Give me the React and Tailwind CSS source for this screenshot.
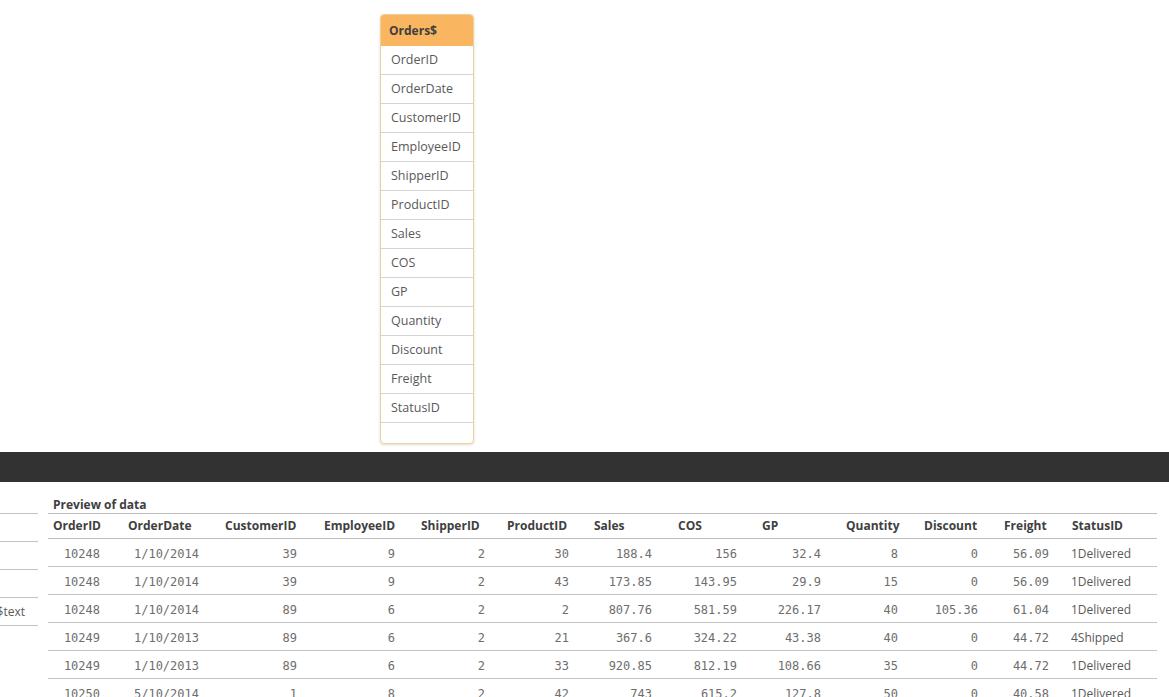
import React from "react";

const fields = ["OrderID","OrderDate","CustomerID","EmployeeID","ShipperID","ProductID","Sales","COS","GP","Quantity","Discount","Freight","StatusID"];

const cols = [
  { w: "w-[75px]", pr: "pr-[23px]" },
  { w: "w-[97px]", pr: "pr-[21px]" },
  { w: "w-[99px]", pr: "pr-[22px]" },
  { w: "w-[97px]", pr: "pr-[21px]" },
  { w: "w-[86px]", pr: "pr-[17px]" },
  { w: "w-[87px]", pr: "pr-[20px]" },
  { w: "w-[84px]", pr: "pr-[21px]" },
  { w: "w-[84px]", pr: "pr-[20px]" },
  { w: "w-[84px]", pr: "pr-[20px]" },
  { w: "w-[78px]", pr: "pr-[21px]" },
  { w: "w-[80px]", pr: "pr-[21px]" },
  { w: "w-[68px]", pr: "pr-[18px]" },
  { w: "w-[90px]", pr: "pr-[4px]" },
];

const rows = [
  ["10248","1/10/2014","39","9","2","30","188.4","156","32.4","8","0","56.09","1Delivered"],
  ["10248","1/10/2014","39","9","2","43","173.85","143.95","29.9","15","0","56.09","1Delivered"],
  ["10248","1/10/2014","89","6","2","2","807.76","581.59","226.17","40","105.36","61.04","1Delivered"],
  ["10249","1/10/2013","89","6","2","21","367.6","324.22","43.38","40","0","44.72","4Shipped"],
  ["10249","1/10/2013","89","6","2","33","920.85","812.19","108.66","35","0","44.72","1Delivered"],
  ["10250","5/10/2014","1","8","2","42","743","615.2","127.8","50","0","40.58","1Delivered"],
];

const sans = "font-['Open_Sans','Noto_Sans',sans-serif]";
const mono = "font-['DejaVu_Sans_Mono','Liberation_Mono',monospace]";

export default function App() {
  return (
    <div className={`w-[1169px] h-[697px] overflow-hidden bg-white ${sans}`}>
      {/* Model viewer canvas */}
      <div className="h-[452px] flex justify-start pl-[380px] pt-[14px]">
        <div className="w-[94px] h-[430px] rounded-[4px] border border-[#ecd19c] bg-white shadow-[0_1px_3px_rgba(120,90,30,0.2)] overflow-hidden flex flex-col">
          <div className="h-[31px] shrink-0 bg-[#f9b55f] flex items-center pl-[8px] text-[12px] font-bold text-[#404040]">
            Orders$
          </div>
          {fields.map((f) => (
            <div key={f} className="h-[29px] shrink-0 border-b border-[#d4d4d4] flex items-center pl-[10px] text-[12.5px] text-[#595959]">
              {f}
            </div>
          ))}
          <div className="flex-1" />
        </div>
      </div>

      {/* Dark divider bar */}
      <div className="h-[30px] bg-[#323232]" />

      {/* Bottom area */}
      <div className="flex">
        {/* Left list (cut off) */}
        <div className="w-[38px] shrink-0 overflow-hidden pt-[31px]">
          {["", "", "", "OrderStatus$text", ""].map((t, i) => (
            <div key={i} className="h-[28px] border-t border-[#c4c4c4] flex items-center justify-end pr-[13px] text-[12px] text-[#595959] whitespace-nowrap">
              {t}
            </div>
          ))}
        </div>

        {/* Preview table */}
        <div className="ml-[10px] w-[1109px] shrink-0">
          <div className="h-[31px] pt-[16px] pl-[5px] leading-[14px] text-[12px] font-bold text-[#404040]">
            Preview of data
          </div>
          <div className="flex h-[26px] border-t border-b border-[#bdbdbd] items-center">
            {fields.map((f, i) => (
              <div key={f} className={`${cols[i].w} shrink-0 pl-[5px] text-[12px] font-bold text-[#404040] whitespace-nowrap`}>
                {f}
              </div>
            ))}
          </div>
          {rows.map((r, ri) => (
            <div key={ri} className="flex h-[28px] pt-[2px] border-b border-[#c4c4c4] items-center">
              {r.map((c, i) =>
                i === 12 ? (
                  <div key={i} className={`${cols[i].w} shrink-0 pl-[4px] text-[12px] text-[#595959] whitespace-nowrap`}>
                    {c}
                  </div>
                ) : (
                  <div key={i} className={`${cols[i].w} ${cols[i].pr} shrink-0 text-right text-[12px] text-[#6e6e6e] whitespace-nowrap ${mono}`}>
                    {c}
                  </div>
                )
              )}
            </div>
          ))}
        </div>
      </div>
    </div>
  );
}
